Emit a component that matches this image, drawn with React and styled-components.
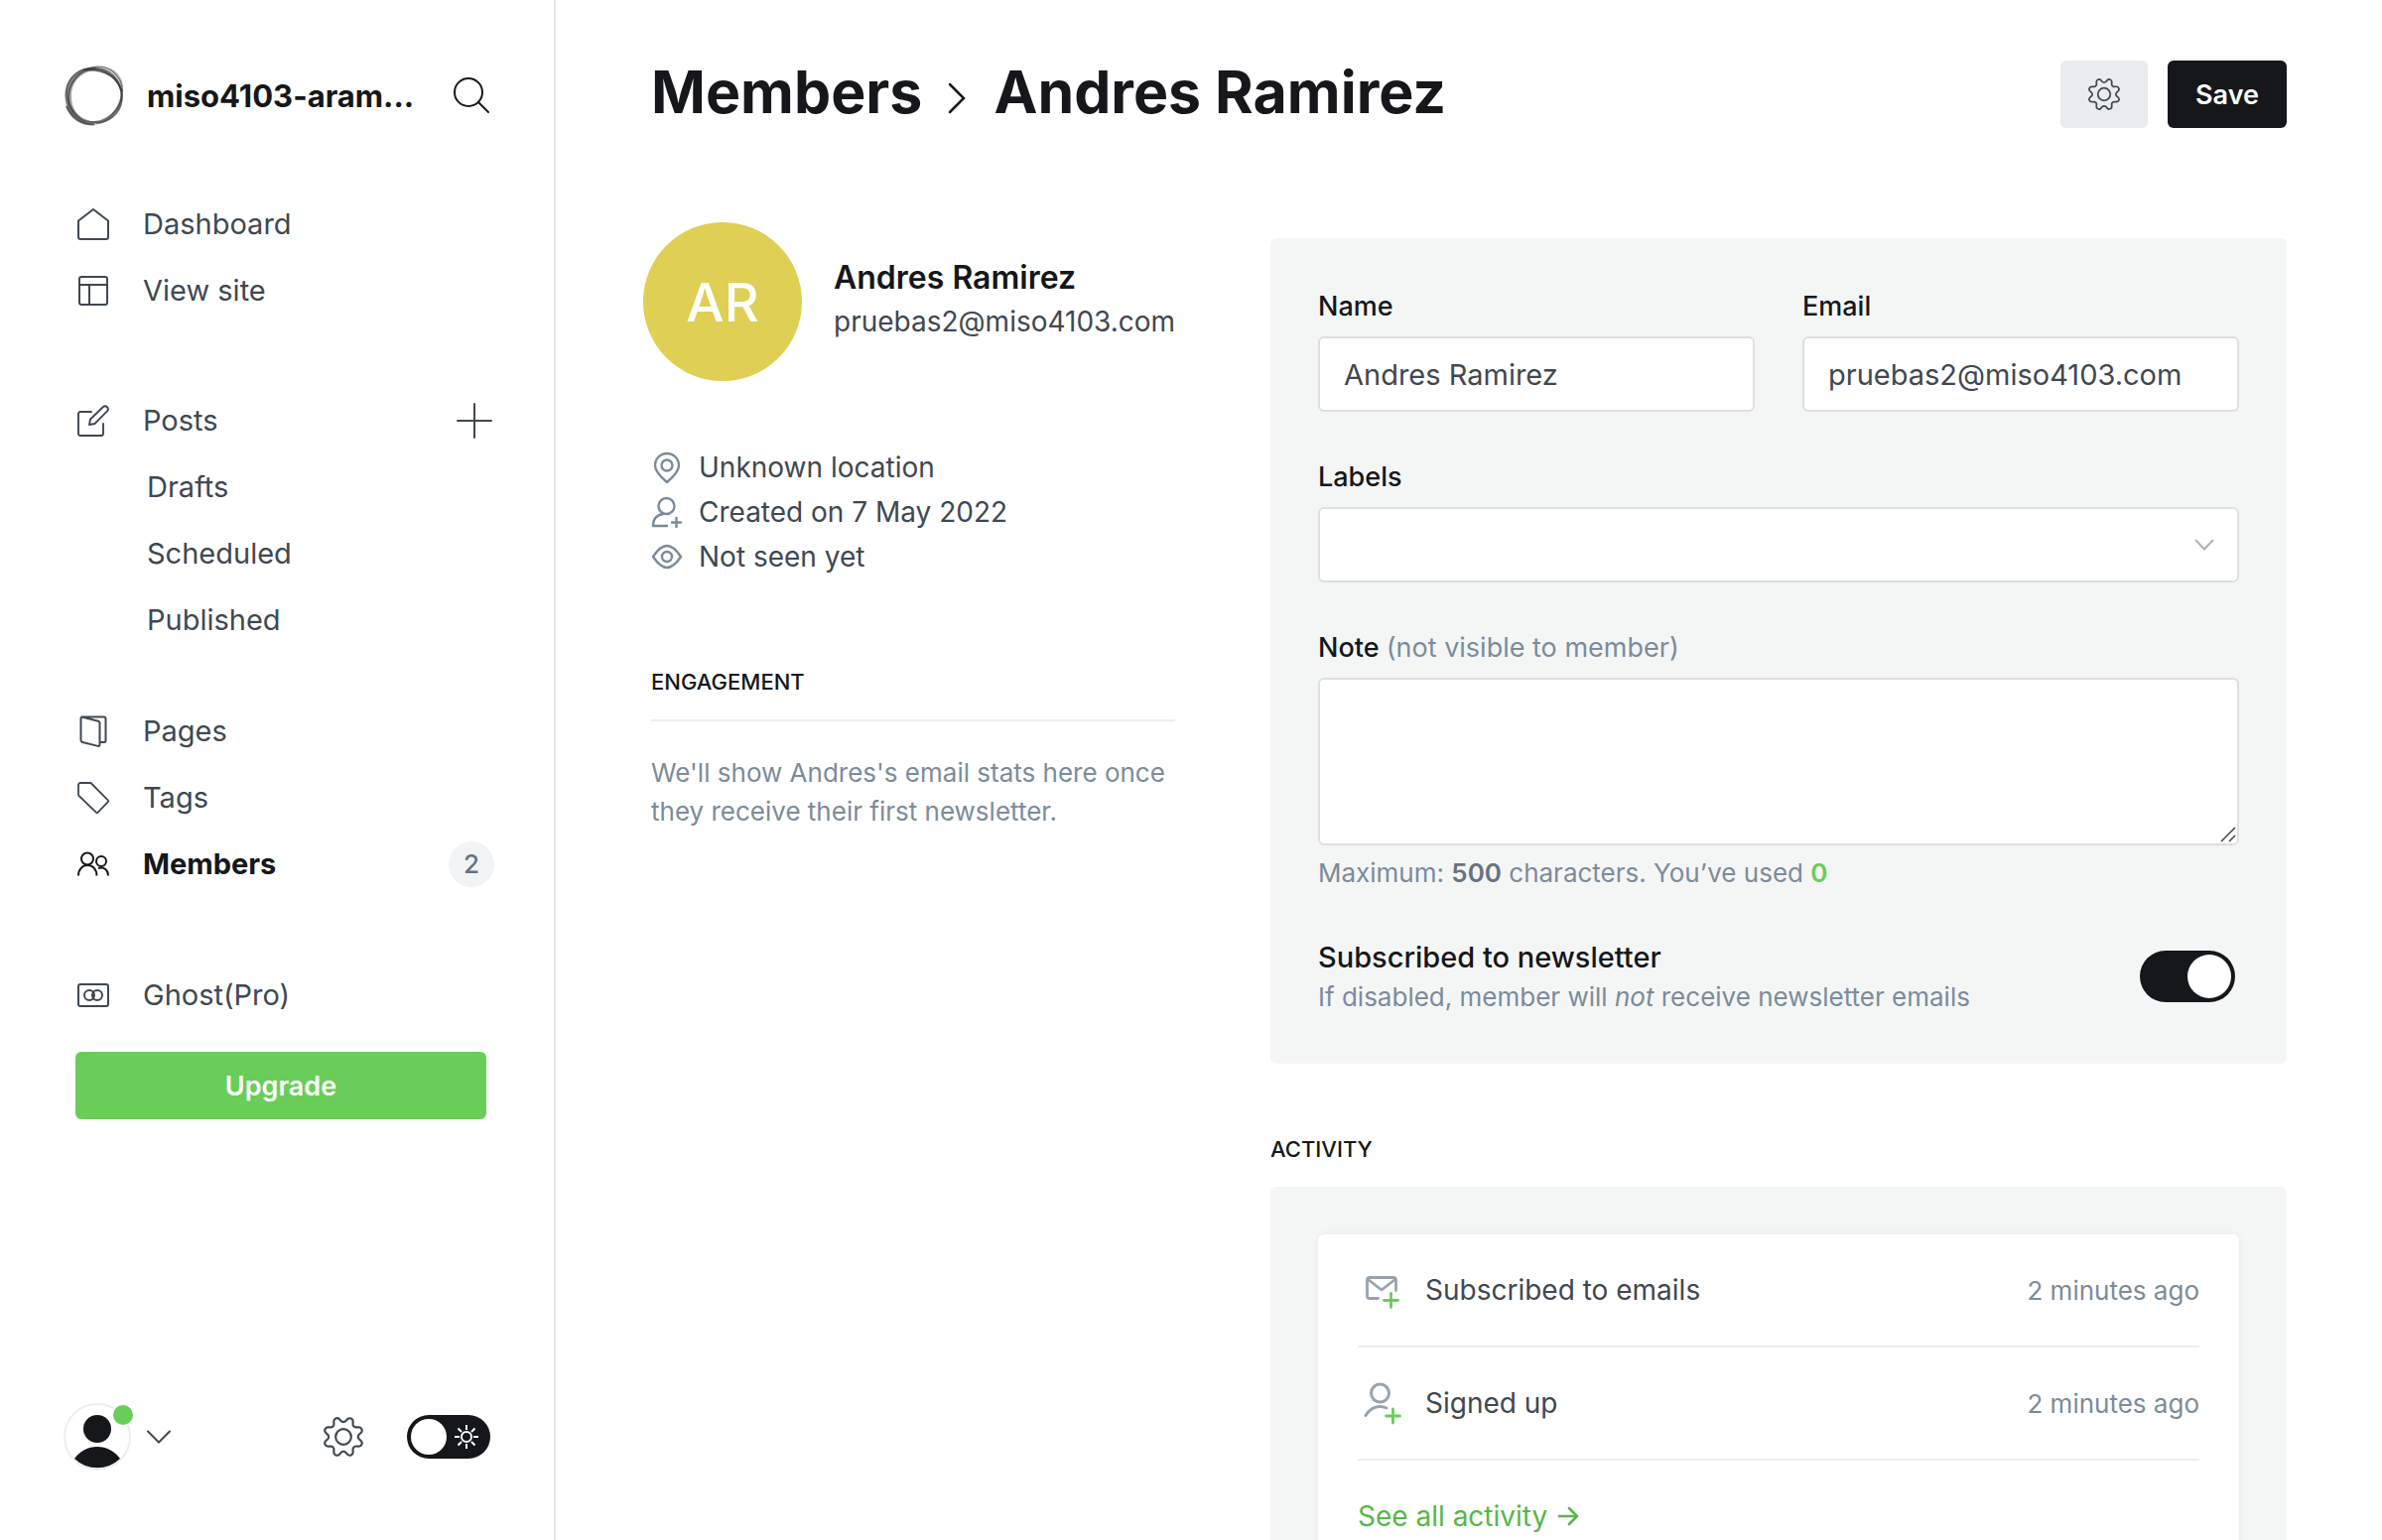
import React, { useState } from "react";
import styled, { createGlobalStyle } from "styled-components";

const ink = "#15171a";
const text = "#3f4851";
const muted = "#7c8b9a";
const green = "#69cd59";
const line = "#ebeef0";

const GlobalStyle = createGlobalStyle`
  *, *::before, *::after { box-sizing: border-box; }
  body {
    margin: 0;
    background: #fff;
    color: ${text};
    font-family: Inter, "Liberation Sans", sans-serif;
    font-optical-sizing: none;
    font-size: 28px;
  }
  button, input, textarea, select { font: inherit; color: inherit; }
  h1, h2, h3, p, ul { margin: 0; padding: 0; font: inherit; }
  ul { list-style: none; }
  a { color: inherit; text-decoration: none; }
`;

const Shell = styled.div`
  display: flex;
  height: 100vh;
`;

/* ---------- Sidebar ---------- */

const Sidebar = styled.aside`
  display: flex;
  flex-direction: column;
  flex: none;
  width: 560px;
  padding: 66px 62px 68px 64px;
  border-right: 2px solid #e6e9eb;
`;

const SiteHeader = styled.div`
  display: flex;
  align-items: center;
  gap: 22px;
  height: 60px;
  margin-bottom: 66px;
`;

const SiteName = styled.div`
  flex: 1;
  min-width: 0;
  overflow: hidden;
  color: ${ink};
  font-size: 31px;
  font-weight: 700;
  white-space: nowrap;
`;

const IconButton = styled.button`
  display: flex;
  align-items: center;
  justify-content: center;
  padding: 0;
  border: 0;
  background: none;
  cursor: pointer;
`;

const SearchButton = styled(IconButton)`
  margin-right: 2px;
`;

const Nav = styled.nav`
  flex: 1;
  padding-left: 12px;
`;

const NavGroup = styled.ul`
  margin-bottom: ${(p) => p.$gap || 0}px;
`;

const NavRow = styled.li`
  display: flex;
  align-items: center;
  justify-content: space-between;
  height: 67px;
  padding-left: ${(p) => (p.$nested ? 72 : 2)}px;
`;

const NavLink = styled.a`
  display: flex;
  align-items: center;
  gap: 34px;
  color: ${(p) => (p.$active ? ink : text)};
  font-size: 29px;
  font-weight: ${(p) => (p.$active ? 700 : 400)};
`;

const Count = styled.span`
  display: flex;
  align-items: center;
  justify-content: center;
  min-width: 46px;
  height: 46px;
  margin-right: -2px;
  border-radius: 23px;
  background: #f1f3f4;
  color: #667380;
  font-size: 26px;
  font-weight: 500;
`;

const Upgrade = styled.button`
  width: calc(100% - 6px);
  height: 68px;
  margin-top: 24px;
  border: 0;
  border-radius: 6px;
  background: ${green};
  color: #fff;
  font-size: 27px;
  font-weight: 600;
  cursor: pointer;
`;

const SideFooter = styled.div`
  display: flex;
  align-items: center;
  justify-content: space-between;
  height: 72px;
  padding-right: 2px;
`;

const FooterGroup = styled.div`
  display: flex;
  align-items: center;
  gap: ${(p) => p.$gap}px;
`;

const UserButton = styled(IconButton)`
  gap: 14px;
`;

const NightSwitch = styled.label`
  position: relative;
  display: flex;
  align-items: center;
  justify-content: space-between;
  width: 84px;
  height: 44px;
  padding: 0 12px 0 4px;
  border-radius: 22px;
  background: ${ink};
  cursor: pointer;
`;

const HiddenCheck = styled.input`
  position: absolute;
  inset: 0;
  width: 100%;
  height: 100%;
  margin: 0;
  opacity: 0;
  cursor: pointer;
`;

const Knob = styled.span`
  width: ${(p) => p.$size}px;
  height: ${(p) => p.$size}px;
  border-radius: 50%;
  background: #fff;
`;

/* ---------- Main ---------- */

const Main = styled.main`
  flex: 1;
  min-width: 0;
  padding: 56px 96px 96px;
  overflow-y: auto;
  scrollbar-width: none;
`;

const Header = styled.header`
  display: flex;
  align-items: center;
  justify-content: space-between;
  height: 78px;
`;

const Title = styled.h1`
  display: flex;
  align-items: center;
  gap: 26px;
  padding-bottom: 4px;
  color: ${ink};
  font-size: 59px;
  font-weight: 700;
  line-height: 72px;
  white-space: nowrap;
`;

const Actions = styled.div`
  display: flex;
  gap: 20px;
`;

const ActionButton = styled.button`
  display: flex;
  align-items: center;
  justify-content: center;
  height: 68px;
  padding: 0 28px;
  border: 0;
  border-radius: 6px;
  background: ${(p) => (p.$primary ? ink : "#e9ebec")};
  color: ${(p) => (p.$primary ? "#fff" : text)};
  font-size: 27px;
  font-weight: 600;
  cursor: pointer;
`;

const Columns = styled.div`
  display: grid;
  grid-template-columns: minmax(0, 33fr) minmax(0, 64fr);
  gap: 96px;
  align-items: start;
  padding-top: 106px;
`;

const Side = styled.div`
  margin-top: -16px;
`;

const Profile = styled.section`
  display: flex;
  align-items: center;
  gap: 32px;
  height: 160px;
  margin: 0 0 64px -8px;
`;

const Avatar = styled.div`
  display: flex;
  align-items: center;
  justify-content: center;
  flex: none;
  width: 160px;
  height: 160px;
  border-radius: 50%;
  background: #dfcf54;
  color: #fff;
  font-size: 54px;
  font-weight: 500;
`;

const ProfileText = styled.div`
  padding-bottom: 4px;
  line-height: 44px;
`;

const ProfileName = styled.h3`
  color: ${ink};
  font-size: 32px;
  font-weight: 600;
  line-height: 44px;
`;

const Facts = styled.ul`
  margin-bottom: 89px;
`;

const Fact = styled.li`
  display: flex;
  align-items: center;
  gap: 16px;
  height: 45px;
`;

const SectionTitle = styled.h2`
  color: ${ink};
  font-size: 22px;
  font-weight: 500;
  line-height: 30px;
  text-transform: uppercase;
`;

const EngagementTitle = styled(SectionTitle)`
  padding-bottom: 23px;
  border-bottom: 2px solid ${line};
`;

const EmptyNote = styled.p`
  padding-top: 32px;
  color: ${muted};
  font-size: 26px;
  line-height: 39px;
`;

const Panel = styled.section`
  padding: 48px;
  border-radius: 6px;
  background: #f4f6f6;
`;

const FieldRow = styled.div`
  display: grid;
  grid-template-columns: 1fr 1fr;
  gap: 48px;
`;

const Field = styled.div`
  display: flex;
  flex-direction: column;
  margin-bottom: 45px;
`;

const Label = styled.label`
  margin-bottom: 9px;
  color: ${ink};
  font-size: 27px;
  font-weight: 500;
  line-height: 42px;
`;

const Hint = styled.span`
  color: ${muted};
  font-weight: 400;
`;

const Input = styled.input`
  width: 100%;
  height: 76px;
  padding: 0 24px;
  border: 2px solid #dddfe0;
  border-radius: 6px;
  background: #fff;
  font-size: 29px;
  outline: none;
`;

const ControlWrap = styled.div`
  position: relative;
`;

const Select = styled.select`
  display: block;
  width: 100%;
  height: 76px;
  padding: 0 24px;
  border: 2px solid #dddfe0;
  border-radius: 6px;
  background: #fff;
  appearance: none;
  outline: none;
`;

const SelectArrow = styled.svg`
  position: absolute;
  top: 32px;
  right: 25px;
  pointer-events: none;
`;

const TextArea = styled.textarea`
  display: block;
  width: 100%;
  height: 169px;
  padding: 16px 24px;
  border: 2px solid #dddfe0;
  border-radius: 6px;
  background: #fff;
  outline: none;
  resize: none;
`;

const Grip = styled.svg`
  position: absolute;
  right: 3px;
  bottom: 3px;
  pointer-events: none;
`;

const Help = styled.p`
  color: ${muted};
  font-size: 26px;
  line-height: 38px;
`;

const CountHelp = styled(Help)`
  padding-top: 9px;
  b { color: #667380; font-weight: 600; }
  b:last-child { color: ${green}; }
`;

const SwitchRow = styled.div`
  display: flex;
  align-items: center;
  justify-content: space-between;
  padding-right: 4px;
`;

const SwitchLabel = styled.label`
  display: block;
  color: ${ink};
  font-size: 29px;
  font-weight: 500;
  line-height: 42px;
`;

const Switch = styled.span`
  position: relative;
  display: flex;
  align-items: center;
  justify-content: flex-end;
  width: 96px;
  height: 52px;
  padding: 4px;
  border-radius: 26px;
  background: ${ink};
`;

const ActivityTitle = styled(SectionTitle)`
  margin: 71px 0 23px;
`;

const ActivityCard = styled.div`
  padding: 0 40px;
  border-radius: 6px;
  background: #fff;
  box-shadow: 0 0 6px rgba(21, 23, 26, 0.06);
`;

const ActivityRow = styled.li`
  display: flex;
  align-items: center;
  height: 114px;
  border-bottom: 2px solid ${line};
`;

const ActivityName = styled.span`
  flex: 1;
  padding-left: 20px;
`;

const Time = styled.time`
  color: ${muted};
  font-size: 26px;
`;

const SeeAll = styled.a`
  display: flex;
  align-items: center;
  gap: 10px;
  height: 112px;
  color: #57b748;
`;

/* ---------- Icons ---------- */

const Icon = ({ size = 32, box = 24, w = 1.5, children, ...rest }) => (
  <svg width={size} height={size} viewBox={`0 0 ${box} ${box}`} fill="none" stroke="currentColor"
    strokeWidth={w} strokeLinecap="round" strokeLinejoin="round" aria-hidden="true" {...rest}>
    {children}
  </svg>
);

const GhostOrb = () => (
  <svg width="62" height="62" viewBox="0 0 62 62" fill="none" role="img" aria-label="Site logo">
    <path d="M32 3C14 3 1.500 14 1.500 31c0 15 10 27 26 29.500C14 54 7.500 44 8 31 8.500 17 18 7 32 6z" fill="#555" fillOpacity=".55" />
    <path d="M20 6C36-3 57 2 60 20c.5 3 0 6-1 9C55 15 42 6 20 6z" fill="#888" fillOpacity=".4" />
    <path d="M59 24c5 18-9 36-29 36.500C47 56 57 43 59 24z" fill="#666" fillOpacity=".55" />
    <g stroke="#333">
      <circle cx="30.500" cy="31.500" r="28" strokeWidth="2" strokeOpacity=".35" />
      <ellipse cx="32" cy="30" rx="29" ry="26" transform="rotate(-50 32 30)" strokeWidth="1.400" strokeOpacity=".55" />
      <ellipse cx="31" cy="31" rx="29" ry="26" transform="rotate(40 31 31)" strokeWidth="1.400" strokeOpacity=".5" />
      <ellipse cx="32" cy="31.500" rx="26" ry="27.500" transform="rotate(30 32 31)" strokeWidth="1.400" strokeOpacity=".45" />
      <path d="M20 5.500C38 4 53 10 59 27" strokeWidth="1.800" strokeOpacity=".75" />
      <path d="M3 42c5 12 15 18.500 28 18.500" strokeWidth="2" strokeOpacity=".75" />
    </g>
  </svg>
);

const SearchIcon = () => (
  <svg width="38" height="38" viewBox="0 0 38 38" fill="none" stroke={ink} strokeWidth="2" strokeLinecap="round" aria-hidden="true">
    <circle cx="16" cy="16" r="14" /><path d="M26 26l10 10" />
  </svg>
);
const HomeIcon = () => (
  <Icon box={32} w={2}><path d="M1 12.500L16 1l15 11.500V29a2 2 0 0 1-2 2H3a2 2 0 0 1-2-2z" /></Icon>
);
const LayoutIcon = () => (
  <Icon box={32} w={2}><rect x="2" y="2" width="28" height="28" rx="2" /><path d="M2 10h28M12 10v20" /></Icon>
);
const EditIcon = () => (
  <Icon box={32} w={1.9}>
    <path d="M14 7H3a2 2 0 0 0-2 2v20a2 2 0 0 0 2 2h21a2 2 0 0 0 2-2V19" />
    <path d="M12 20l1-5.500L26 2a3 3 0 0 1 4.200 4.200L17.500 19z" />
  </Icon>
);
const PagesIcon = () => (
  <Icon box={32} w={2}>
    <path d="M4.500 1.500l16.500 4.200A2 2 0 0 1 22.500 7.600V29.500a1.400 1.400 0 0 1-1.800 1.400L5 27a2 2 0 0 1-1.500-1.900V3A1.500 1.500 0 0 1 5 1.500h22A1.700 1.700 0 0 1 28.500 3v22.500a1.500 1.500 0 0 1-1.500 1.500h-4" />
  </Icon>
);
const TagIcon = () => (
  <Icon box={32} w={1.8}><path d="M3 1h10.500L31 18.700a1 1 0 0 1 0 1.200L20.500 30.800a1 1 0 0 1-1.400 0L1.500 14a2 2 0 0 1-.5-1.200V3a2 2 0 0 1 2-2z" /></Icon>
);
const MembersIcon = () => (
  <Icon box={32} w={2} strokeLinecap="butt">
    <circle cx="10" cy="10.500" r="6" />
    <path d="M1 27.500C1 21 5 17 10.200 17s9.300 4 9.300 10.500" />
    <circle cx="24" cy="13" r="5" />
    <path d="M21 20c6-2 10 2 10 7.500" />
  </Icon>
);
const ProIcon = () => (
  <Icon box={32} w={2}>
    <rect x="1" y="5" width="30" height="22" rx="2" /><circle cx="12" cy="16" r="5" /><circle cx="20" cy="16" r="5" />
  </Icon>
);
const PlusIcon = () => (
  <Icon size={36} box={36} w={2}><path d="M18 1v34M1 18h34" /></Icon>
);
const GearIcon = ({ size, w = 1.3 }) => (
  <Icon size={size} w={w}>
    <circle cx="12" cy="12" r="4.700" />
    <path d="M10.546 2.438a1.957 1.957 0 0 0 2.908 0L14.400 1.400a1.959 1.959 0 0 1 3.400 1.407l-.071 1.400a1.958 1.958 0 0 0 2.051 2.051l1.400-.071a1.959 1.959 0 0 1 1.411 3.400l-1.042.94a1.960 1.960 0 0 0 0 2.909l1.042.94a1.959 1.959 0 0 1-1.400 3.400l-1.400-.071a1.958 1.958 0 0 0-2.056 2.056l.071 1.400a1.959 1.959 0 0 1-3.410 1.400l-.94-1.041a1.959 1.959 0 0 0-2.908 0L9.600 22.600a1.959 1.959 0 0 1-3.400-1.407l.071-1.400a1.959 1.959 0 0 0-2.056-2.056l-1.400.071A1.958 1.958 0 0 1 1.400 14.400l1.041-.94a1.960 1.960 0 0 0 0-2.909L1.400 9.606A1.958 1.958 0 0 1 2.813 6.200l1.400.071A1.958 1.958 0 0 0 6.270 4.214L6.200 2.810A1.959 1.959 0 0 1 9.606 1.400z" />
  </Icon>
);
const UserAvatar = () => (
  <svg width="70" height="72" viewBox="0 0 70 72" aria-hidden="true">
    <circle cx="34" cy="36" r="33" fill="#fff" stroke="#eceeef" strokeWidth="2" />
    <circle cx="34" cy="28" r="14" fill={ink} />
    <path d="M11 58a28 28 0 0 1 46 0 33 33 0 0 1-46 0z" fill={ink} />
    <circle cx="60" cy="14" r="11" fill="#fff" />
    <circle cx="60" cy="14" r="10" fill={green} />
  </svg>
);
const DownIcon = () => (
  <svg width="24" height="14" viewBox="0 0 24 14" fill="none" stroke={text} strokeWidth="2" strokeLinecap="round" aria-hidden="true">
    <path d="M1 1.500l11 11 11-11" />
  </svg>
);
const SunIcon = () => (
  <svg width="24" height="24" viewBox="0 0 24 24" fill="none" stroke="#fff" strokeWidth="2" aria-hidden="true">
    <circle cx="12" cy="12" r="5" />
    <path d="M12 0v5M12 19v5M0 12h5M19 12h5M3.500 3.500L7 7M17 17l3.500 3.500M3.500 20.500L7 17M17 7l3.500-3.500" />
  </svg>
);
const RightIcon = () => (
  <svg width="20" height="72" viewBox="0 0 20 72" fill="none" stroke={ink} strokeWidth="2.500" strokeLinecap="round" aria-hidden="true">
    <path d="M2 28l14 14L2 56" />
  </svg>
);
const PinIcon = () => (
  <Icon size={32} box={32} w={2.4} stroke={muted}>
    <path d="M16 31C10 26 4 20 4 14a12 12 0 0 1 24 0c0 6-6 12-12 17z" /><circle cx="16" cy="14" r="5.500" />
  </Icon>
);
const UserPlusIcon = () => (
  <Icon size={32} box={32} w={2.4} stroke={muted}>
    <circle cx="15.500" cy="10" r="8" />
    <path d="M12 18C6 19 2 23 2 30h14M25.500 22v9M21 26.500h9" />
  </Icon>
);
const EyeIcon = () => (
  <Icon size={32} box={32} w={2.4} stroke={muted}>
    <path d="M2 16c4-6 9-11 14-11S26 10 30 16c-4 6-9 11-14 11S6 22 2 16z" /><circle cx="16" cy="16" r="5" />
  </Icon>
);
const MailPlusIcon = () => (
  <svg width="48" height="48" viewBox="0 0 48 48" fill="none" strokeWidth="2.800" strokeLinecap="round" strokeLinejoin="round" aria-hidden="true">
    <path d="M20.500 32.500H12a2.500 2.500 0 0 1-2.500-2.500V14a2.500 2.500 0 0 1 2.500-2.500h24a2.500 2.500 0 0 1 2.500 2.500v10.500" stroke="#98a3ae" />
    <path d="M10.500 13.500L24 24l13.500-10.500" stroke="#98a3ae" />
    <path d="M33.500 27.500v14M26.500 34.500h14" stroke={green} />
  </svg>
);
const SignupIcon = () => (
  <svg width="48" height="48" viewBox="0 0 48 48" fill="none" strokeWidth="3" strokeLinecap="round" aria-hidden="true">
    <circle cx="22.500" cy="14" r="9" stroke="#98a3ae" />
    <path d="M8 36.500c5-8 13-11 21-7.500" stroke="#98a3ae" />
    <path d="M35.500 30v14M28.500 37h14" stroke={green} strokeWidth="2.800" />
  </svg>
);
const ArrowIcon = () => (
  <svg width="22" height="20" viewBox="0 0 22 20" fill="none" stroke="currentColor" strokeWidth="2.600" strokeLinecap="round" strokeLinejoin="round" aria-hidden="true">
    <path d="M2 10h18M12 2l8 8-8 8" />
  </svg>
);

/* ---------- Screen ---------- */

const groups = [
  { gap: 64, items: [{ name: "Dashboard", icon: HomeIcon }, { name: "View site", icon: LayoutIcon }] },
  { gap: 45, items: [
    { name: "Posts", icon: EditIcon, add: true },
    { name: "Drafts", nested: true },
    { name: "Scheduled", nested: true },
    { name: "Published", nested: true },
  ] },
  { gap: 65, items: [
    { name: "Pages", icon: PagesIcon },
    { name: "Tags", icon: TagIcon },
    { name: "Members", icon: MembersIcon, active: true, count: 2 },
  ] },
  { gap: 0, items: [{ name: "Ghost(Pro)", icon: ProIcon }] },
];

const facts = [
  { icon: PinIcon, label: "Unknown location" },
  { icon: UserPlusIcon, label: "Created on 7 May 2022" },
  { icon: EyeIcon, label: "Not seen yet" },
];

const activity = [
  { icon: MailPlusIcon, label: "Subscribed to emails", when: "2 minutes ago" },
  { icon: SignupIcon, label: "Signed up", when: "2 minutes ago" },
];

function AppSidebar() {
  return (
    <Sidebar>
      <SiteHeader>
        <GhostOrb />
        <SiteName>miso4103-aram...</SiteName>
        <SearchButton aria-label="Search"><SearchIcon /></SearchButton>
      </SiteHeader>
      <Nav>
        {groups.map((group, i) => (
          <NavGroup key={i} $gap={group.gap}>
            {group.items.map(({ name, icon: Glyph, nested, active, count, add }) => (
              <NavRow key={name} $nested={nested}>
                <NavLink href="#" $active={active}>{Glyph && <Glyph />}{name}</NavLink>
                {count && <Count>{count}</Count>}
                {add && <IconButton aria-label="New post"><PlusIcon /></IconButton>}
              </NavRow>
            ))}
          </NavGroup>
        ))}
        <Upgrade>Upgrade</Upgrade>
      </Nav>
      <SideFooter>
        <UserButton aria-label="Account"><UserAvatar /><DownIcon /></UserButton>
        <FooterGroup $gap={44}>
          <IconButton aria-label="Settings"><GearIcon size={40} /></IconButton>
          <NightSwitch>
            <HiddenCheck type="checkbox" aria-label="Night mode" />
            <Knob $size={36} />
            <SunIcon />
          </NightSwitch>
        </FooterGroup>
      </SideFooter>
    </Sidebar>
  );
}

export default function App() {
  const [name, setName] = useState("Andres Ramirez");
  const [email, setEmail] = useState("pruebas2@miso4103.com");
  return (
    <>
      <GlobalStyle />
      <Shell>
        <AppSidebar />
        <Main>
          <Header>
            <Title><a href="#">Members</a><RightIcon /><span>Andres Ramirez</span></Title>
            <Actions>
              <ActionButton aria-label="Member actions"><GearIcon size={32} /></ActionButton>
              <ActionButton $primary>Save</ActionButton>
            </Actions>
          </Header>
          <Columns>
            <Side>
              <Profile>
                <Avatar>AR</Avatar>
                <ProfileText>
                  <ProfileName>Andres Ramirez</ProfileName>
                  <p>pruebas2@miso4103.com</p>
                </ProfileText>
              </Profile>
              <Facts>
                {facts.map(({ icon: Glyph, label }) => (
                  <Fact key={label}><Glyph />{label}</Fact>
                ))}
              </Facts>
              <EngagementTitle>Engagement</EngagementTitle>
              <EmptyNote>We'll show Andres's email stats here once they receive their first newsletter.</EmptyNote>
            </Side>
            <div>
              <Panel>
                <FieldRow>
                  <Field>
                    <Label htmlFor="name">Name</Label>
                    <Input id="name" value={name} onChange={(e) => setName(e.target.value)} />
                  </Field>
                  <Field>
                    <Label htmlFor="email">Email</Label>
                    <Input id="email" value={email} onChange={(e) => setEmail(e.target.value)} />
                  </Field>
                </FieldRow>
                <Field>
                  <Label htmlFor="labels">Labels</Label>
                  <ControlWrap>
                    <Select id="labels" defaultValue=""><option value="" /></Select>
                    <SelectArrow width="20" height="12" viewBox="0 0 20 12" fill="none" stroke="#abb4be" strokeWidth="2" aria-hidden="true">
                      <path d="M1 1l9 9.500L19 1" />
                    </SelectArrow>
                  </ControlWrap>
                </Field>
                <Field>
                  <Label htmlFor="note">Note <Hint>(not visible to member)</Hint></Label>
                  <ControlWrap>
                    <TextArea id="note" />
                    <Grip width="16" height="16" viewBox="0 0 16 16" stroke="#444" strokeWidth="1.500" aria-hidden="true">
                      <path d="M1 15L15 1M9 15l6-6" />
                    </Grip>
                  </ControlWrap>
                  <CountHelp>Maximum: <b>500</b> characters. You’ve used <b>0</b></CountHelp>
                </Field>
                <SwitchRow>
                  <div>
                    <SwitchLabel htmlFor="newsletter">Subscribed to newsletter</SwitchLabel>
                    <Help>If disabled, member will <em>not</em> receive newsletter emails</Help>
                  </div>
                  <Switch>
                    <HiddenCheck id="newsletter" type="checkbox" defaultChecked />
                    <Knob $size={44} />
                  </Switch>
                </SwitchRow>
              </Panel>
              <ActivityTitle>Activity</ActivityTitle>
              <Panel>
                <ActivityCard>
                  <ul>
                    {activity.map(({ icon: Glyph, label, when }) => (
                      <ActivityRow key={label}>
                        <Glyph /><ActivityName>{label}</ActivityName><Time>{when}</Time>
                      </ActivityRow>
                    ))}
                  </ul>
                  <SeeAll href="#">See all activity <ArrowIcon /></SeeAll>
                </ActivityCard>
              </Panel>
            </div>
          </Columns>
        </Main>
      </Shell>
    </>
  );
}
